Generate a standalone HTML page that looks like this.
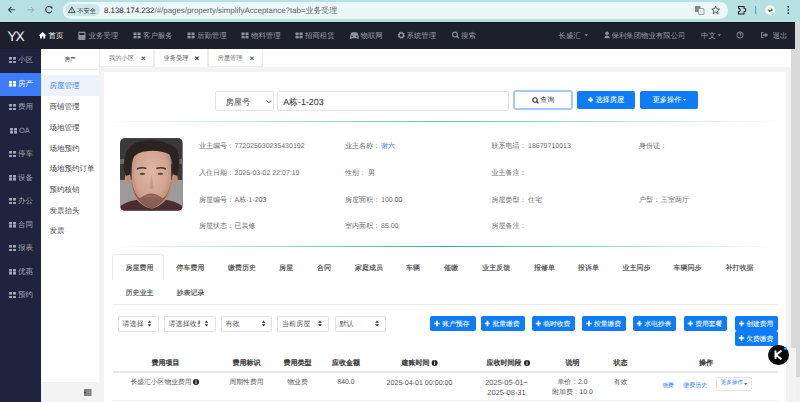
<!DOCTYPE html>
<html><head><meta charset="utf-8">
<style>
*{box-sizing:border-box;margin:0;padding:0}
html,body{text-rendering:geometricPrecision;width:800px;height:402px;overflow:hidden;background:#f3f3f3;font-family:"Liberation Sans",sans-serif;position:relative}
.a{position:absolute;white-space:nowrap}
svg{position:absolute;overflow:visible}
#tb{position:absolute;left:0;top:0;width:800px;height:22px;background:#b7e0e3}
#pill{position:absolute;left:63px;top:2px;width:665px;height:16.5px;border-radius:8.25px;background:#ecf7f7}
#chip{position:absolute;left:64.5px;top:3.75px;width:35.5px;height:12.5px;border-radius:6.25px;background:#cde8ea;font-size:6.3px;color:#3c4043;line-height:15px;padding-left:12.7px}
#url{left:104px;top:3.5px;font-size:7.9px;color:#5f6368;line-height:14px}
#nav{position:absolute;left:0;top:22px;width:795px;height:26.5px;background:#1e1f2c;border-top:1.5px solid #15141f}
.ni{position:absolute;top:0;line-height:26.2px;font-size:7.4px;color:#9a9ca5;white-space:nowrap}
#side{position:absolute;left:0;top:48.5px;width:41px;height:354px;background:#1f233d}
.si{position:absolute;left:0;width:41px;height:23.5px;font-size:7.5px;color:#a0a3b1;line-height:22.2px;padding-left:18px}
.si.act{background:#3d7dfc;color:#fff}
.gi{position:absolute;left:8.5px;top:8.3px;width:7.5px;height:6px;background:
 linear-gradient(currentColor,currentColor) 0 0/3.2px 2.6px no-repeat,
 linear-gradient(currentColor,currentColor) 4.2px 0/3.2px 2.6px no-repeat,
 linear-gradient(currentColor,currentColor) 0 3.4px/3.2px 2.6px no-repeat,
 linear-gradient(currentColor,currentColor) 4.2px 3.4px/3.2px 2.6px no-repeat}
#sub{position:absolute;left:41px;top:48.5px;width:58px;height:354px;background:#fff}
.sb{position:absolute;left:0;width:58px;font-size:7.5px;color:#444;padding-left:8.5px;height:20.7px;line-height:22.2px;white-space:nowrap}
#tabs{position:absolute;left:99px;top:48.5px;width:692px;height:18.5px;background:#fff}
.tab{position:absolute;top:0;height:18.5px;border:1px solid #eeeeee;border-top:none;font-size:6.25px;color:#777;line-height:19.5px}
.tab b{position:absolute;top:0;font-size:8px;color:#555;font-weight:bold}
#scroll{position:absolute;left:791px;top:22px;width:9px;height:380px;background:#f1f1f1}
#thumb{position:absolute;left:791px;top:22px;width:9px;height:355px;background:#d9d9d9}
#card{position:absolute;left:104px;top:72px;width:682px;height:330px;background:#fff}
.btn{position:absolute;background:#0d7cf6;color:#fff;-webkit-text-stroke:0.06px #fff;border-radius:2px;font-size:6.8px;text-align:center;white-space:nowrap}
.lbl{position:absolute;font-size:7px;color:#6e6e6e;white-space:nowrap;line-height:9px}
.sel{position:absolute;border:1px solid #e3e3e3;border-radius:2px;font-size:7.1px;color:#555;background:#fff;white-space:nowrap}
.th{position:absolute;font-size:7px;color:#333;-webkit-text-stroke:0.3px #333;white-space:nowrap;transform:translateX(-50%);line-height:9px}
.tt{position:absolute;font-size:7px;color:#444;-webkit-text-stroke:0.15px #444;white-space:nowrap;transform:translateX(-50%);line-height:9px}
.td{position:absolute;font-size:6.8px;color:#555;white-space:nowrap;transform:translateX(-50%);line-height:10px;text-align:center}
</style></head><body>
<div id="tb"></div>
<!-- toolbar icons -->
<svg style="left:0;top:0" width="60" height="22">
 <path d="M14.8 9.8H8.6 M11.4 7 L8.6 9.8 L11.4 12.6" stroke="#3c4043" stroke-width="1.1" fill="none"/>
 <path d="M27.5 9.8H33.7 M30.9 7 L33.7 9.8 L30.9 12.6" stroke="#8fa7aa" stroke-width="1" fill="none"/>
 <path d="M51.7 8.1 A3.2 3.2 0 1 0 51.9 10.8" stroke="#3c4043" stroke-width="1.1" fill="none"/>
 <path d="M49.6 6.4 L52.4 6.4 L52.4 9.2Z" fill="#3c4043"/>
</svg>
<div id="pill"></div>
<div id="chip">不安全</div>
<svg style="left:67.5px;top:6px" width="8" height="8"><path d="M3.75 0.8 L7 6.6 L0.5 6.6Z" stroke="#3c4043" stroke-width="0.9" fill="none" stroke-linejoin="round"/><path d="M3.75 2.6V4.6 M3.75 5.1V5.7" stroke="#3c4043" stroke-width="0.8"/></svg>
<div class="a" id="url"><span style="color:#202124">8.138.174.232</span>/#/pages/property/simplifyAcceptance?tab=业务受理</div>
<svg style="left:690px;top:0" width="110" height="22">
 <rect x="5" y="6" width="5.5" height="6" rx="0.6" fill="#80868b"/><rect x="8.5" y="8.5" width="5.5" height="6" rx="0.6" fill="#e8eaed" stroke="#80868b" stroke-width="0.7"/>
 <path d="M25.7 6.3 L26.8 8.9 L29.6 9.1 L27.5 10.9 L28.2 13.6 L25.7 12.2 L23.2 13.6 L23.9 10.9 L21.8 9.1 L24.6 8.9Z" stroke="#3c4043" stroke-width="0.85" fill="none" stroke-linejoin="round"/>
 <path d="M48.5 6.5 H54 V8.2 Q55.8 8.2 55.8 10 Q55.8 11.8 54 11.8 V14 H48.5 V11.8 Q50.2 11.8 50.2 10 Q50.2 8.2 48.5 8.2Z" stroke="#202124" stroke-width="1.1" fill="none"/>
 <rect x="65.2" y="6" width="1.1" height="8" fill="#55aab5"/>
 <circle cx="80" cy="10" r="5" fill="#f1f3f2"/><path d="M77.5 9 L79.3 12.3 L82.8 10.4 L82 8 L80.5 10.3Z" fill="#2f7d45"/>
 <circle cx="98.2" cy="6.8" r="0.85" fill="#202124"/><circle cx="98.2" cy="10" r="0.85" fill="#202124"/><circle cx="98.2" cy="13.2" r="0.85" fill="#202124"/>
</svg>

<div id="scroll"></div><div id="thumb"></div>
<div style="position:absolute;left:791px;top:347.6px;width:4.6px;height:55px;background:#f3f3f3"></div>
<div id="nav">
 <div class="ni" style="left:7.6px;top:1.2px;font-size:13.7px;letter-spacing:-1.3px;color:#f4f4f4;">YX</div>
 <div class="ni" style="left:48.5px;color:#fff">首页</div>
 <div class="ni" style="left:88.5px">业务受理</div>
 <div class="ni" style="left:143px">客户服务</div>
 <div class="ni" style="left:197px">后勤管理</div>
 <div class="ni" style="left:251px">物料管理</div>
 <div class="ni" style="left:305px">招商租赁</div>
 <div class="ni" style="left:360.5px">物联网</div>
 <div class="ni" style="left:406.5px">系统管理</div>
 <div class="ni" style="left:461px">搜索</div>
 <div class="ni" style="left:558.5px">长盛汇</div>
 <div class="ni" style="left:611.5px">保利集团物业有限公司</div>
 <div class="ni" style="left:701px">中文</div>
 <div class="ni" style="left:772.5px">退出</div>
</div>
<svg style="left:0;top:22px" width="795" height="26">
 <!-- home -->
 <path d="M42.6 10 L38.8 13.6 L40 13.6 V16.5 H41.9 V14.6 H43.3 V16.5 H45.2 V13.6 L46.4 13.6Z" fill="#fff"/>
 <!-- calculator -->
 <rect x="78.3" y="9.8" width="7.2" height="8.2" rx="1" fill="#8f919a"/><rect x="79.5" y="11" width="4.8" height="2" fill="#1d1e2b"/>
 <g fill="#8f919a">
  <g transform="translate(133.5,10.5)"><rect width="3.1" height="2.6"/><rect x="4" width="3.1" height="2.6"/><rect y="3.3" width="3.1" height="2.6"/><rect x="4" y="3.3" width="3.1" height="2.6"/></g>
  <g transform="translate(187.5,10.5)"><rect width="3.1" height="2.6"/><rect x="4" width="3.1" height="2.6"/><rect y="3.3" width="3.1" height="2.6"/><rect x="4" y="3.3" width="3.1" height="2.6"/></g>
  <g transform="translate(241.5,10.5)"><rect width="3.1" height="2.6"/><rect x="4" width="3.1" height="2.6"/><rect y="3.3" width="3.1" height="2.6"/><rect x="4" y="3.3" width="3.1" height="2.6"/></g>
  <g transform="translate(295.5,10.5)"><rect width="3.1" height="2.6"/><rect x="4" width="3.1" height="2.6"/><rect y="3.3" width="3.1" height="2.6"/><rect x="4" y="3.3" width="3.1" height="2.6"/></g>
 </g>
 <!-- car -->
 <path d="M350 14 L351.3 10.8 Q351.6 10.2 352.3 10.2 H356.4 Q357.1 10.2 357.4 10.8 L358.7 14 V17 H357.4 V16.2 H351.3 V17 H350Z" fill="#8f919a"/>
 <circle cx="352" cy="14.2" r="0.8" fill="#1d1e2b"/><circle cx="356.7" cy="14.2" r="0.8" fill="#1d1e2b"/>
 <!-- gear -->
 <circle cx="401.3" cy="13.2" r="2.6" fill="none" stroke="#8f919a" stroke-width="1.8" stroke-dasharray="1.3 0.7"/>
 <circle cx="401.3" cy="13.2" r="2.2" fill="none" stroke="#8f919a" stroke-width="1.2"/>
 <!-- search -->
 <circle cx="455" cy="12.5" r="2.4" fill="none" stroke="#8f919a" stroke-width="1.1"/><path d="M456.8 14.3 L458.8 16.3" stroke="#8f919a" stroke-width="1.3"/>
 <!-- caret -->
 <path d="M584.5 12.3 H588 L586.25 14.2Z" fill="#8f919a"/>
 <!-- user -->
 <circle cx="607" cy="11.3" r="1.8" fill="#8f919a"/><path d="M604.3 16.3 Q604.5 13.4 607 13.4 Q609.5 13.4 609.7 16.3Z" fill="#8f919a"/>
 <path d="M717.5 12.3 H721 L719.25 14.2Z" fill="#8f919a"/>
 <!-- help -->
 <circle cx="740" cy="13" r="3.1" fill="none" stroke="#8f919a" stroke-width="0.9"/><path d="M738.9 12.2 Q739 11.1 740 11.1 Q741.1 11.1 741.1 12 Q741.1 12.7 740 13.2 V13.7 M740 14.4 V15" stroke="#8f919a" stroke-width="0.8" fill="none"/>
 <!-- logout -->
 <path d="M763.5 10.5 H761.5 V15.5 H763.5" stroke="#8f919a" stroke-width="0.9" fill="none"/><path d="M763 12.2 H765.5 V10.8 L768 13 L765.5 15.2 V13.8 H763Z" fill="#8f919a"/>
</svg>

<div id="side">
 <div class="si" style="top:0.5px"><i class="gi"></i>小区</div>
 <div class="si act" style="top:24px"><i class="gi"></i>房产</div>
 <div class="si" style="top:47.5px"><i class="gi"></i>费用</div>
 <div class="si" style="top:71px;padding-left:19px"><i class="gi" style="left:10px"></i>OA</div>
 <div class="si" style="top:94.5px"><i class="gi"></i>停车</div>
 <div class="si" style="top:118px"><i class="gi"></i>设备</div>
 <div class="si" style="top:141.5px"><i class="gi"></i>办公</div>
 <div class="si" style="top:165px"><i class="gi"></i>合同</div>
 <div class="si" style="top:188.5px"><i class="gi"></i>报表</div>
 <div class="si" style="top:212px"><i class="gi"></i>优惠</div>
 <div class="si" style="top:235.5px"><i class="gi"></i>预约</div>
</div>

<div id="sub">
 <div class="sb" style="top:0;height:21px;line-height:22px;text-align:center;padding:0;font-size:5.5px;color:#333;border-bottom:1px solid #eee">房产</div>
 <div class="sb" style="top:26.5px;height:21px;line-height:22.5px;background:#edf2fd;color:#3d7dfc">房屋管理</div>
 <div class="sb" style="top:47.7px">商铺管理</div>
 <div class="sb" style="top:68.4px">场地管理</div>
 <div class="sb" style="top:89.1px">场地预约</div>
 <div class="sb" style="top:109.8px">场地预约订单</div>
 <div class="sb" style="top:130.5px">预约核销</div>
 <div class="sb" style="top:151.2px">发票抬头</div>
 <div class="sb" style="top:171.9px">发票</div>
 <div style="position:absolute;left:0;top:333.3px;width:58px;height:21px;background:#f3f3f3"></div>
 <svg style="left:42.7px;top:340.3px" width="9" height="8"><rect x="0" y="0" width="7.5" height="7" fill="#7d7d7d"/><path d="M2.5 1.7H7.5 M2.5 3.5H7.5 M2.5 5.3H7.5" stroke="#a9a9a9" stroke-width="0.5"/><path d="M0.3 2.6 L1.9 3.5 L0.3 4.4Z" fill="#222"/></svg>
</div>

<div id="tabs">
 <div class="tab" style="left:0;width:54.5px;padding-left:9px">我的小区<b style="left:41px">×</b></div>
 <div class="tab" style="left:54.5px;width:54px;padding-left:9px;border-bottom:none;color:#555">业务受理<b style="left:40px;color:#222">×</b></div>
 <div class="tab" style="left:108.5px;width:55px;padding-left:9px">房屋管理<b style="left:41px">×</b></div>
</div>

<div id="card"></div>
<!-- search -->
<div class="sel" style="left:215px;top:91px;width:58.5px;height:20px;font-size:8.3px;color:#444;line-height:20px;padding-left:9.4px">房屋号</div>
<svg style="left:265.5px;top:99.5px" width="6" height="4"><path d="M0.5 0.5 L2.75 2.8 L5 0.5" stroke="#333" stroke-width="1" fill="none"/></svg>
<div class="sel" style="left:276.5px;top:91px;width:232px;height:20px;font-size:8.9px;color:#333;line-height:20.5px;padding-left:5.7px">A栋-1-203</div>
<div style="position:absolute;left:512.5px;top:90px;width:60.5px;height:19.5px;border:2px solid #a6c8f7;border-radius:3px;background:#fff;font-size:7.2px;color:#333;line-height:15.5px;padding-left:25.5px">查询</div>
<svg style="left:531.5px;top:96.5px" width="8" height="8"><circle cx="3" cy="3" r="2.2" stroke="#333" stroke-width="1.1" fill="none"/><path d="M4.6 4.6 L6.4 6.4" stroke="#333" stroke-width="1.3"/></svg>
<div class="btn" style="left:576.5px;top:91px;width:58.5px;height:17.5px;line-height:17.5px;font-size:7.2px;padding-left:8px">选择房屋</div>
<svg style="left:588.3px;top:96.6px" width="7" height="7"><path d="M2.6 0.3V5.2 M0.15 2.75H5.05" stroke="#fff" stroke-width="1.8"/></svg>
<div class="btn" style="left:640px;top:91px;width:58px;height:17.5px;line-height:17.5px;font-size:7.2px;padding-right:4px">更多操作</div>
<svg style="left:683.3px;top:99.2px" width="5" height="3"><path d="M0 0H3.2L1.6 1.8Z" fill="#fff"/></svg>
<div style="position:absolute;left:104px;top:121px;width:682px;height:1.3px;background:linear-gradient(90deg,rgba(93,196,168,0),#5ec6a9 50%,rgba(93,196,168,0))"></div>

<!-- photo -->
<svg style="left:120.3px;top:137.9px" width="62.8" height="72.9" viewBox="0 0 63 73">
 <defs><clipPath id="cp"><rect width="63" height="73" rx="5"/></clipPath>
 <radialGradient id="fg" cx="0.5" cy="0.4" r="0.62"><stop offset="0" stop-color="#e0b8a6"/><stop offset="0.65" stop-color="#d0a491"/><stop offset="1" stop-color="#b07f6c"/></radialGradient></defs>
 <g clip-path="url(#cp)">
 <rect width="63" height="73" fill="#3b393a"/>
 <rect y="21" width="63" height="5" fill="#6a6868"/>
 <rect y="42" width="63" height="31" fill="#9e9a99"/>
 <path d="M0 73 L1 68 Q8 63 18 62 L45 62 Q55 63 62 68 L63 73Z" fill="#4a2d2e"/>
 <ellipse cx="7.8" cy="41" rx="3" ry="5.5" fill="#c08d78"/>
 <ellipse cx="55" cy="41" rx="3" ry="5.5" fill="#c08d78"/>
 <path d="M12 20 Q12 11 31.5 10 Q51 11 51 22 L51.5 48 Q49 66 31.5 71 Q14 66 11.5 48Z" fill="url(#fg)"/>
 <path d="M11.5 42 Q13 64 31.5 71 Q49 64 51.5 42 Q49 57 43 60.5 Q37 55.5 31.5 55.5 Q26 55.5 20 60.5 Q14 57 11.5 42Z" fill="#6e4c40" opacity="0.7"/>
 <path d="M4 32 Q2 5 25 2.5 Q46 1 57 11 Q62 22 57.5 38 L53 36 Q53 22 50 16.5 Q40 12 29 13 Q15 14 13 21 Q11 29 10.5 36 L6.5 38Z" fill="#2a2421"/>
 <path d="M17 31 Q21.5 29 26.5 30.5" stroke="#4a3028" stroke-width="1.5" fill="none"/>
 <path d="M36.5 30.5 Q41.5 29 46 31" stroke="#4a3028" stroke-width="1.5" fill="none"/>
 <ellipse cx="22.5" cy="36" rx="2.7" ry="1.1" fill="#5a4840"/>
 <ellipse cx="40.5" cy="36" rx="2.7" ry="1.1" fill="#5a4840"/>
 <path d="M31.5 36 L29.5 50 Q31.5 52 34 50Z" fill="#b98672" opacity="0.45"/>
 <path d="M25.5 58 Q31.5 59.5 37.5 58" stroke="#a56a60" stroke-width="1.5" fill="none"/>
 </g>
</svg>

<!-- info -->
<div class="lbl" style="left:199px;top:142.4px">业主编号：</div><div class="lbl" style="left:234.5px;top:142.4px">772025030235430192</div>
<div class="lbl" style="left:345px;top:142.4px">业主名称：</div><div class="lbl" style="left:381px;top:142px;color:#2f7bf0">谢六</div>
<div class="lbl" style="left:491.5px;top:142.4px">联系电话：</div><div class="lbl" style="left:528px;top:142.4px">18679710013</div>
<div class="lbl" style="left:639px;top:142.4px">身份证：</div>
<div class="lbl" style="left:199px;top:169.3px">入住日期：</div><div class="lbl" style="left:234.5px;top:169.3px">2025-03-02 22:07:19</div>
<div class="lbl" style="left:345px;top:169.3px">性别：</div><div class="lbl" style="left:368px;top:169.3px">男</div>
<div class="lbl" style="left:491.5px;top:169.3px">业主备注：</div>
<div class="lbl" style="left:199px;top:196.2px">房屋编号：</div><div class="lbl" style="left:234.5px;top:196.2px">A栋-1-203</div>
<div class="lbl" style="left:345px;top:196.2px">房屋面积：</div><div class="lbl" style="left:381px;top:196.2px">100.00</div>
<div class="lbl" style="left:491.5px;top:196.2px">房屋类型：</div><div class="lbl" style="left:528px;top:196.2px">住宅</div>
<div class="lbl" style="left:639px;top:196.2px">户型：</div><div class="lbl" style="left:661px;top:196.2px">三室两厅</div>
<div class="lbl" style="left:199px;top:222.3px">房屋状态：</div><div class="lbl" style="left:234.5px;top:222.3px">已装修</div>
<div class="lbl" style="left:345px;top:222.3px">室内面积：</div><div class="lbl" style="left:381px;top:222.3px">85.00</div>
<div class="lbl" style="left:491.5px;top:222.3px">房屋备注：</div>
<div style="position:absolute;left:112.5px;top:245.5px;width:665px;height:1.3px;background:linear-gradient(90deg,rgba(45,179,140,0),#2db38c 50%,rgba(45,179,140,0))"></div>

<!-- fee tabs -->
<div style="position:absolute;left:112.4px;top:254.4px;width:51.2px;height:25.8px;border:1px solid #ebebeb;border-bottom:none;border-radius:3px 3px 0 0;background:#fff"></div>
<div class="tt" style="left:139.5px;top:263.6px">房屋费用</div>
<div class="tt" style="left:190.5px;top:263.6px">停车费用</div>
<div class="tt" style="left:242px;top:263.6px">缴费历史</div>
<div class="tt" style="left:286px;top:263.6px">房屋</div>
<div class="tt" style="left:324px;top:263.6px">合同</div>
<div class="tt" style="left:369px;top:263.6px">家庭成员</div>
<div class="tt" style="left:413px;top:263.6px">车辆</div>
<div class="tt" style="left:451px;top:263.6px">催缴</div>
<div class="tt" style="left:496.3px;top:263.6px">业主反馈</div>
<div class="tt" style="left:544.5px;top:263.6px">报修单</div>
<div class="tt" style="left:588.5px;top:263.6px">投诉单</div>
<div class="tt" style="left:636.4px;top:263.6px">业主同步</div>
<div class="tt" style="left:687.5px;top:263.6px">车辆同步</div>
<div class="tt" style="left:739.5px;top:263.6px">补打收据</div>
<div class="tt" style="left:139.5px;top:288.7px">历史业主</div>
<div class="tt" style="left:190.5px;top:288.7px">抄表记录</div>
<div style="position:absolute;left:112.5px;top:304px;width:665px;height:1px;background:#ececec"></div>

<!-- filters -->
<div class="sel" style="left:117.5px;top:315.5px;width:41px;height:16.5px;line-height:14.5px;padding-left:4px">请选择</div>
<div class="sel" style="left:163.5px;top:315.5px;width:52px;height:16.5px;line-height:14.5px;padding-left:4px;overflow:hidden"><span style="display:inline-block;width:31.5px;overflow:hidden;vertical-align:top">请选择收费</span></div>
<div class="sel" style="left:220.5px;top:315.5px;width:51px;height:16.5px;line-height:14.5px;padding-left:4px">有效</div>
<div class="sel" style="left:277px;top:315.5px;width:51.5px;height:16.5px;line-height:14.5px;padding-left:4px">当前房屋</div>
<div class="sel" style="left:334.5px;top:315.5px;width:51px;height:16.5px;line-height:14.5px;padding-left:4px">默认</div>
<svg style="left:0;top:0" width="800" height="402">
 <g fill="#333">
  <path d="M147.7 322.8 L149.5 320.6 L151.3 322.8Z M147.7 324.3 L149.5 326.5 L151.3 324.3Z"/>
  <path d="M204.7 322.8 L206.5 320.6 L208.3 322.8Z M204.7 324.3 L206.5 326.5 L208.3 324.3Z"/>
  <path d="M261.7 322.8 L263.5 320.6 L265.3 322.8Z M261.7 324.3 L263.5 326.5 L265.3 324.3Z"/>
  <path d="M318.2 322.8 L320 320.6 L321.8 322.8Z M318.2 324.3 L320 326.5 L321.8 324.3Z"/>
  <path d="M375.2 322.8 L377 320.6 L378.8 322.8Z M375.2 324.3 L377 326.5 L378.8 324.3Z"/>
 </g>
</svg>

<div class="btn" style="left:429.5px;top:316px;width:46.5px;height:14.5px;line-height:17.3px;padding-left:6px">账户预存</div>
<div class="btn" style="left:480.5px;top:316px;width:44px;height:14.5px;line-height:17.3px;padding-left:7px">批量缴费</div>
<div class="btn" style="left:531.5px;top:316px;width:43.5px;height:14.5px;line-height:17.3px;padding-left:7px">临时收费</div>
<div class="btn" style="left:582px;top:316px;width:44px;height:14.5px;line-height:17.3px;padding-left:7px">按量缴费</div>
<div class="btn" style="left:632.5px;top:316px;width:43.5px;height:14.5px;line-height:17.3px;padding-left:7px">水电抄表</div>
<div class="btn" style="left:683.5px;top:316px;width:43.5px;height:14.5px;line-height:17.3px;padding-left:7px">费用套餐</div>
<div class="btn" style="left:734.5px;top:316px;width:43.5px;height:14.5px;line-height:17.3px;padding-left:7px">创建费用</div>
<div class="btn" style="left:734.5px;top:330.5px;width:43.5px;height:15px;line-height:17.8px;padding-left:7px">欠费缴费</div>
<svg style="left:0;top:0" width="800" height="402">
 <g stroke="#fff" stroke-width="1.7">
  <path d="M437 320.8V326.2 M434.3 323.5H439.7"/>
  <path d="M487.5 320.8V326.2 M484.8 323.5H490.2"/>
  <path d="M538.5 320.8V326.2 M535.8 323.5H541.2"/>
  <path d="M589 320.8V326.2 M586.3 323.5H591.7"/>
  <path d="M639.5 320.8V326.2 M636.8 323.5H642.2"/>
  <path d="M690.5 320.8V326.2 M687.8 323.5H693.2"/>
  <path d="M741.5 320.8V326.2 M738.8 323.5H744.2"/>
  <path d="M741.5 335.3V340.7 M738.8 338H744.2"/>
 </g>
</svg>
<div style="position:absolute;left:768.3px;top:344.5px;width:20.5px;height:20.5px;border-radius:50%;background:#0a0a0a"></div>
<svg style="left:772px;top:348px" width="14" height="14"><path d="M3.5 2.5V11 M9.5 2.5 L4 7 L9.5 11.2" stroke="#fff" stroke-width="1.9" fill="none"/></svg>
<div style="position:absolute;left:783.5px;top:346.5px;width:3px;height:3px;border-radius:50%;background:#3a8cff"></div>

<!-- table -->
<div class="th" style="left:165.5px;top:358.5px">费用项目</div>
<div class="th" style="left:246.5px;top:358.5px">费用标识</div>
<div class="th" style="left:297.5px;top:358.5px">费用类型</div>
<div class="th" style="left:346px;top:358.5px">应收金额</div>
<div class="th" style="left:415.4px;top:358.5px">建账时间</div>
<div class="th" style="left:504px;top:358.5px">应收时间段</div>
<div class="th" style="left:572.5px;top:358.5px">说明</div>
<div class="th" style="left:620.5px;top:358.5px">状态</div>
<div class="th" style="left:706px;top:358.5px">操作</div>
<svg style="left:0;top:0" width="800" height="402">
 <g fill="#222">
  <circle cx="434.6" cy="363" r="3"/><circle cx="527" cy="363" r="3"/><circle cx="196" cy="382" r="3"/>
 </g>
 <g stroke="#fff" stroke-width="0.9"><path d="M434.6 362V365 M527 362V365 M196 381V384"/></g>
 <g fill="#fff"><circle cx="434.6" cy="361" r="0.5"/><circle cx="527" cy="361" r="0.5"/><circle cx="196" cy="380" r="0.5"/></g>
</svg>
<div style="position:absolute;left:112.5px;top:371.2px;width:665px;height:1.5px;background:#e9e9e9"></div>
<div class="td" style="left:161px;top:378px">长盛汇小区物业费用</div>
<div class="td" style="left:246.5px;top:378px">周期性费用</div>
<div class="td" style="left:297.5px;top:378px">物业费</div>
<div class="td" style="left:346px;top:378px">840.0</div>
<div class="td" style="left:419.5px;top:378px;font-size:7.1px">2025-04-01 00:00:00</div>
<div class="td" style="left:506.5px;top:378px;font-size:7.5px;line-height:10px">2025-05-01~<br>2025-08-31</div>
<div class="td" style="left:572.5px;top:378px">单价：2.0<br>附加费：10.0</div>
<div class="td" style="left:620.5px;top:378px">有效</div>
<div class="td" style="left:668px;top:380.5px;color:#2f7bf0;font-size:5.6px">缴费</div>
<div class="td" style="left:695.2px;top:380.5px;color:#2f7bf0;font-size:6px">缴费历史</div>
<div style="position:absolute;left:716px;top:377px;width:35.5px;height:13.5px;border:1px solid #e6e6e6;border-radius:2px;font-size:5.6px;color:#2f7bf0;line-height:11.5px;padding-left:3.6px;white-space:nowrap">更多操作</div>
<svg style="left:744.2px;top:383.2px" width="5" height="3"><path d="M0 0H3.4L1.7 1.9Z" fill="#2f7bf0"/></svg>
<div style="position:absolute;left:112.5px;top:399.5px;width:665px;height:1px;background:#eeeeee"></div>

</body></html>
